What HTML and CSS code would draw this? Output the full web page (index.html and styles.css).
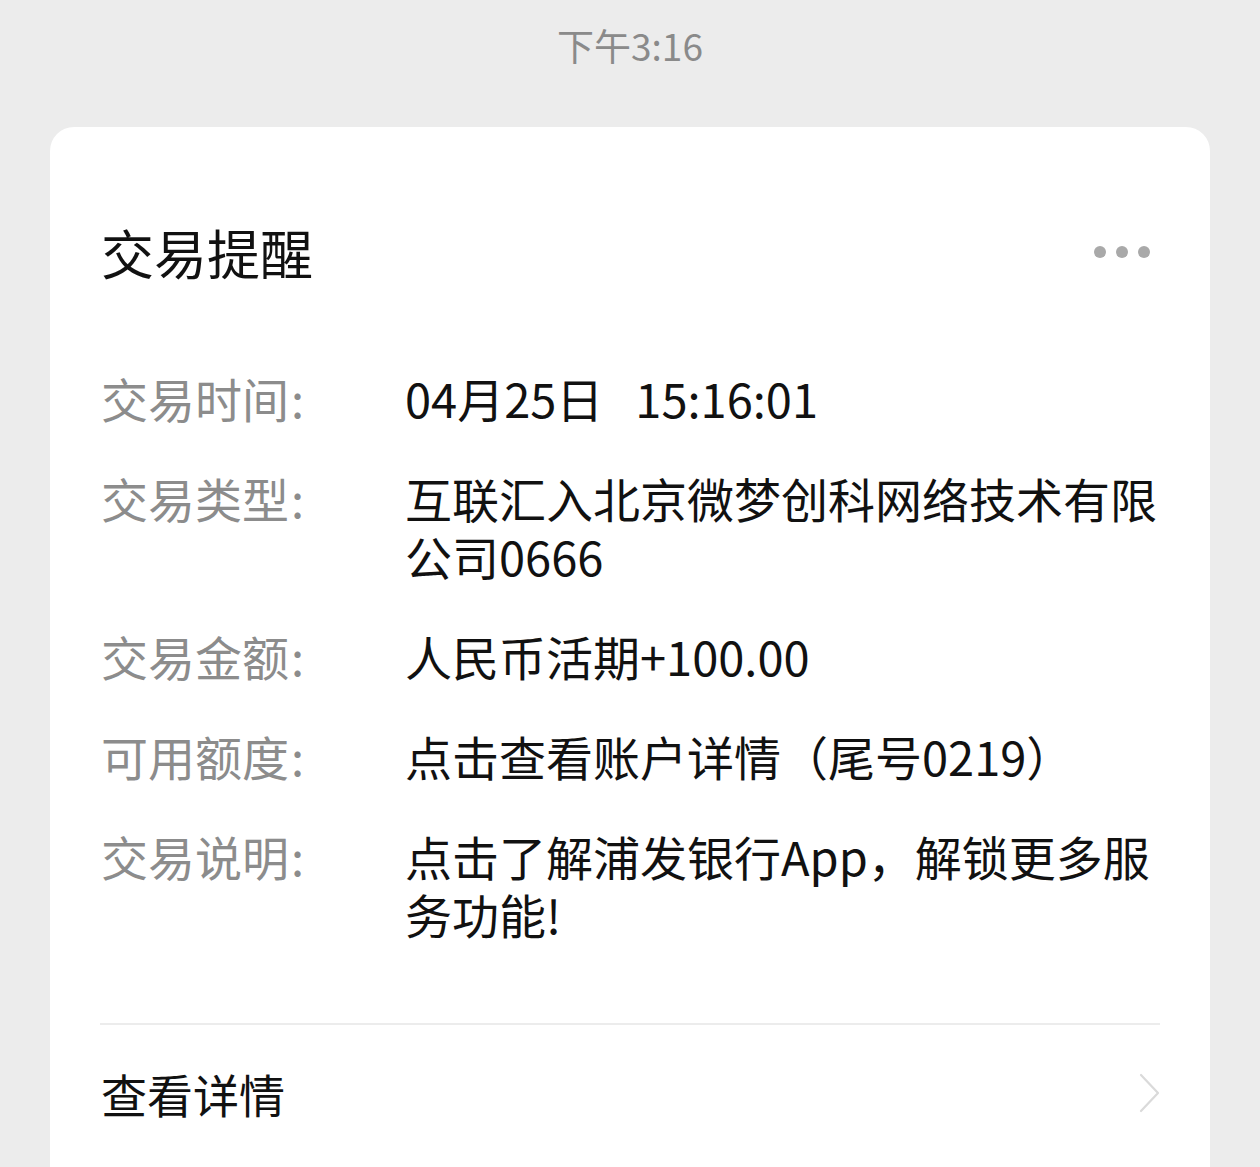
FILE: index.html
```html
<!DOCTYPE html>
<html lang="zh-CN">
<head>
<meta charset="utf-8">
<link rel="stylesheet" href="styles.css">
</head>
<body>
<div class="timebar">下午3:16</div>
<div class="card">
  <div class="head">
    <div class="title">交易提醒</div>
    <div class="more"><span></span><span></span><span></span></div>
  </div>
  <div class="rows">
    <div class="label">交易时间<span class="colon">:</span></div>
    <div class="value">04月25日<span class="sp"></span>15:16:01</div>
    <div class="label">交易类型<span class="colon">:</span></div>
    <div class="value">互联汇入北京微梦创科网络技术有限公司0666</div>
    <div class="label">交易金额<span class="colon">:</span></div>
    <div class="value">人民币活期+100.00</div>
    <div class="label">可用额度<span class="colon">:</span></div>
    <div class="value">点击查看账户详情（尾号0219）</div>
    <div class="label">交易说明<span class="colon">:</span></div>
    <div class="value">点击了解浦发银行App，解锁更多服务功能!</div>
  </div>
  <div class="divider"></div>
  <div class="foot">
    <div class="link">查看详情</div>
    <svg class="chev" width="26" height="42" viewBox="0 0 26 42"><polyline points="4,3 21,21 4,39" fill="none" stroke="#dadada" stroke-width="2.2" stroke-linecap="round" stroke-linejoin="round"/></svg>
  </div>
</div>
</body>
</html>
```
FILE: styles.css
```css
html, body {
  margin: 0;
  padding: 0;
  background: #ececec;
  font-family: "Noto Sans CJK SC", "Noto Sans", sans-serif;
}
.timebar {
  height: 127px;
  line-height: 90px;
  text-align: center;
  font-size: 37px;
  color: #8a8a8a;
}
.card {
  margin: 0 50px;
  background: #fff;
  border-radius: 24px;
  padding: 93px 50px 0 50px;
  height: 1080px;
  box-sizing: border-box;
}
.head {
  display: flex;
  align-items: center;
  justify-content: space-between;
  height: 64px;
}
.title {
  font-size: 53px;
  line-height: 64px;
  color: #111;
  margin-left: 1px;
}
.more {
  display: flex;
  gap: 10px;
  margin-right: 10px;
}
.more span {
  width: 12px;
  height: 12px;
  border-radius: 50%;
  background: #a9a9a9;
}
.rows {
  display: grid;
  grid-template-columns: 305px 1fr;
  row-gap: 42px;
  margin-top: 85px;
  margin-right: -10px;
  font-size: 47px;
  line-height: 58px;
}
.label {
  color: #8c8c8c;
  margin-left: 1px;
}
.colon {
  margin-left: 2px;
}
.value {
  color: #111;
}
.sp {
  display: inline-block;
  width: 32px;
}
.divider {
  height: 2px;
  background: #ececec;
  margin-top: 80px;
}
.foot {
  display: flex;
  align-items: center;
  justify-content: space-between;
  padding-top: 39px;
}
.link {
  font-size: 46px;
  line-height: 58px;
  color: #111;
  margin-left: 1px;
}
.chev {
  margin-right: -3px;
}
```
